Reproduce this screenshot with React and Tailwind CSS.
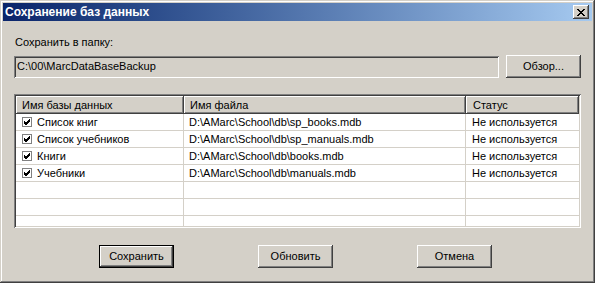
import React from 'react';

const raised = 'shadow-[inset_-1px_-1px_#404040,inset_1px_1px_#ffffff,inset_-2px_-2px_#808080,inset_2px_2px_#d4d0c8]';
const sunken = 'shadow-[inset_1px_1px_#808080,inset_-1px_-1px_#ffffff,inset_2px_2px_#404040,inset_-2px_-2px_#d4d0c8]';

const rows = [
  { name: 'Список книг', file: 'D:\\AMarc\\School\\db\\sp_books.mdb', status: 'Не используется' },
  { name: 'Список учебников', file: 'D:\\AMarc\\School\\db\\sp_manuals.mdb', status: 'Не используется' },
  { name: 'Книги', file: 'D:\\AMarc\\School\\db\\books.mdb', status: 'Не используется' },
  { name: 'Учебники', file: 'D:\\AMarc\\School\\db\\manuals.mdb', status: 'Не используется' },
  null,
  null,
  null,
];

function Check() {
  return (
    <span className="w-[10px] h-[10px] border border-[#808080] bg-white flex items-center justify-center shrink-0">
      <svg width="8" height="8" viewBox="0 0 8 8">
        <path d="M1 3.5 L3 5.5 L7 1.5 M1 4.5 L3 6.5 L7 2.5" stroke="#000" strokeWidth="1" fill="none" shapeRendering="crispEdges" />
      </svg>
    </span>
  );
}

function Button({ children, isDefault }) {
  if (isDefault) {
    return (
      <div className="border border-black">
        <div className={`w-[73px] h-[21px] flex items-center justify-center bg-[#d4d0c8] ${raised}`}>{children}</div>
      </div>
    );
  }
  return (
    <div className={`w-[75px] h-[23px] flex items-center justify-center bg-[#d4d0c8] ${raised}`}>{children}</div>
  );
}

export default function App() {
  return (
    <div className="w-[595px] h-[283px] bg-[#d4d0c8] p-[3px] flex flex-col font-['Liberation_Sans',Arial,sans-serif] text-[11px] text-black leading-[13px] shadow-[inset_-1px_-1px_#404040,inset_1px_1px_#d4d0c8,inset_-2px_-2px_#808080,inset_2px_2px_#ffffff]">
      {/* title bar */}
      <div className="h-[18px] bg-gradient-to-r from-[#0a246a] to-[#a6caf0] flex items-center justify-between pl-[2px] pr-[3px]">
        <span className="text-white font-bold text-[12px]">Сохранение баз данных</span>
        <div className={`w-[16px] h-[14px] bg-[#d4d0c8] flex items-center justify-center ${raised}`}>
          <svg width="8" height="7" viewBox="0 0 8 7" shapeRendering="crispEdges">
            <path d="M0 0h2v1h-2zM6 0h2v1h-2zM1 1h2v1h-2zM5 1h2v1h-2zM2 2h4v1h-4zM3 3h2v1h-2zM2 4h4v1h-4zM1 5h2v1h-2zM5 5h2v1h-2zM0 6h2v1h-2zM6 6h2v1h-2z" fill="#000" />
          </svg>
        </div>
      </div>

      <div className="flex-1 flex flex-col px-[11px] pt-[15px]">
        <div className="pl-[1px]">Сохранить в папку:</div>
        <div className="flex items-center gap-[7px] mt-[6px]">
          <div className={`flex-1 h-[22px] flex items-center pl-[3px] ${sunken}`}>C:\00\MarcDataBaseBackup</div>
          <Button>Обзор...</Button>
        </div>

        {/* list */}
        <div className={`mt-[16px] h-[134px] p-[2px] bg-white ${sunken}`}>
          <div className="h-full overflow-hidden flex flex-col">
            <div className="h-[18px] flex shrink-0 bg-[#d4d0c8]">
              <div className={`w-[168px] flex items-center pl-[6px] ${raised}`}>Имя базы данных</div>
              <div className={`w-[282px] flex items-center pl-[6px] ${raised}`}>Имя файла</div>
              <div className={`flex-1 flex items-center pl-[7px] ${raised}`}>Статус</div>
            </div>
            {rows.map((r, i) => (
              <div key={i} className="h-[17px] flex shrink-0 border-b border-[#d4d0c8]">
                <div className="w-[168px] flex items-center pl-[6px] gap-[5px] border-r border-[#d4d0c8]">
                  {r && <Check />}
                  {r && <span>{r.name}</span>}
                </div>
                <div className="w-[282px] flex items-center pl-[5px] border-r border-[#d4d0c8]">{r && r.file}</div>
                <div className="flex-1 flex items-center pl-[6px]">{r && r.status}</div>
              </div>
            ))}
          </div>
        </div>

        <div className="flex mt-[17px] pl-[85px] gap-[84px]">
          <Button isDefault>Сохранить</Button>
          <Button>Обновить</Button>
          <Button>Отмена</Button>
        </div>
      </div>
    </div>
  );
}
